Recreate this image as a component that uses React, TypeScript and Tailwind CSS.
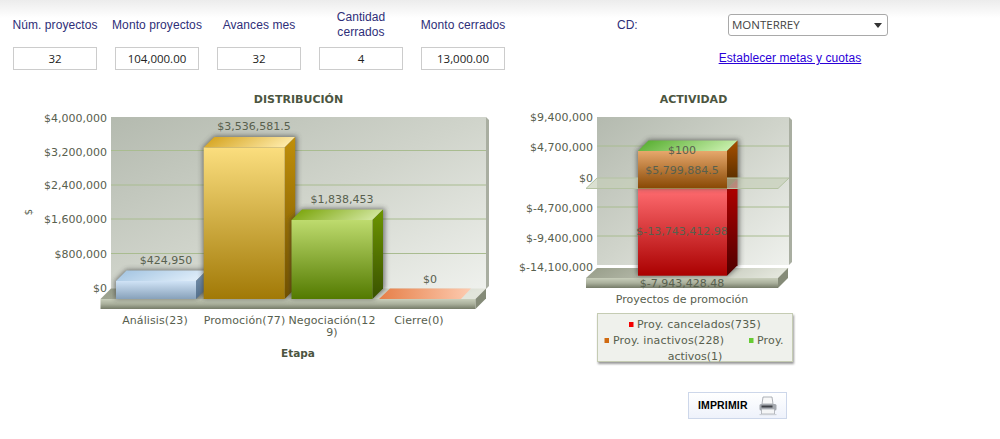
const F = "'DejaVu Sans', sans-serif";
const TC = "#58604e";

function T({ x, y, a = "middle", b = false, c = TC, s = 11, ls = 0, children }: { x: number; y: number; a?: "start" | "middle" | "end"; b?: boolean; c?: string; s?: number; ls?: number; children: React.ReactNode }) {
  return (
    <text x={x} y={y} textAnchor={a} fontFamily={F} fontSize={s} fontWeight={b ? 700 : 400} fill={c} letterSpacing={ls}>
      {children}
    </text>
  );
}

function Grad({ id, stops, x2 = 0, y2 = 1 }: { id: string; stops: string[]; x2?: number; y2?: number }) {
  return (
    <linearGradient id={id} x1="0" y1="0" x2={x2} y2={y2}>
      {stops.map((c, i) => (
        <stop key={i} offset={i / (stops.length - 1)} stopColor={c} />
      ))}
    </linearGradient>
  );
}

function Defs() {
  return (
    <defs>
      <Grad id="wall" stops={["#b4baaf", "#d0d4cb", "#eff1ed"]} x2={1} y2={1} />
      <Grad id="floorF" stops={["#c8cebb", "#aab09c", "#757b68"]} />
      <Grad id="floorT" stops={["#969c88", "#e2e5db"]} x2={1} y2={0.1} />
      <Grad id="blueF" stops={["#d0e3f6", "#87a1ba"]} />
      <Grad id="blueT" stops={["#a0c2e0", "#dcebf8"]} x2={1} y2={0.3} />
      <Grad id="blueS" stops={["#7a96b2", "#54708c"]} />
      <Grad id="yelF" stops={["#fbde7e", "#a17906"]} />
      <Grad id="yelT" stops={["#d29e14", "#fde9a6"]} x2={1} y2={0.2} />
      <Grad id="yelS" stops={["#c08f0a", "#745300"]} />
      <Grad id="grnF" stops={["#bedb6e", "#537a00"]} />
      <Grad id="grnT" stops={["#74a000", "#cfe49a"]} x2={1} y2={0.2} />
      <Grad id="grnS" stops={["#6c9500", "#3a5200"]} />
      <Grad id="cie" stops={["#e67f48", "#fdcbb0"]} x2={1} y2={0} />
      <Grad id="limeT" stops={["#50aa28", "#c4eca8"]} x2={1} y2={0.2} />
      <Grad id="oraF" stops={["#e6a86c", "#884804"]} />
      <Grad id="oraS" stops={["#a85000", "#4a2800"]} />
      <Grad id="redF" stops={["#ff6c70", "#aa0000"]} />
      <Grad id="redS" stops={["#b80000", "#4e0000"]} />
      <filter id="blur" x="-30%" y="-30%" width="160%" height="160%">
        <feGaussianBlur stdDeviation="2.5" />
      </filter>
      <filter id="legShadow" x="-5%" y="-10%" width="110%" height="125%">
        <feDropShadow dx="1" dy="2" stdDeviation="1" floodColor="#000" floodOpacity="0.4" />
      </filter>
    </defs>
  );
}

function Bar({ x, w, top, bottom, d = 10.5, front, topFill, side }: { x: number; w: number; top: number; bottom: number; d?: number; front: string; topFill: string; side: string }) {
  const r = x + w;
  return (
    <g>
      <path d={`M${x - 1} ${top} L${x + d} ${top - d - 1} H${r + d + 2} V${bottom - d} L${r + 1} ${bottom} H${x - 1}Z`} fill="#333" opacity="0.6" filter="url(#blur)" />
      <path d={`M${x} ${top} L${x + d} ${top - d} H${r + d} L${r} ${top}Z`} fill={`url(#${topFill})`} />
      <path d={`M${r} ${top} L${r + d} ${top - d} V${bottom - d} L${r} ${bottom}Z`} fill={`url(#${side})`} />
      <rect x={x} y={top} width={w} height={bottom - top} fill={`url(#${front})`} />
    </g>
  );
}

function Dist() {
  const grid = [150.5, 185, 219, 253.5];
  const ys: [string, number][] = [["$4,000,000", 122], ["$3,200,000", 156], ["$2,400,000", 189], ["$1,600,000", 223], ["$800,000", 258], ["$0", 292]];
  return (
    <svg width="480" height="290" viewBox="20 90 480 290" className="shrink-0">
      <Defs />
      <T x={298.5} y={103} b s={11} c="#4c5540">DISTRIBUCIÓN</T>
      <path d="M486 117 L489 120 V286 L486 289Z" fill="#a9aea1" />
      <rect x="111" y="117" width="375" height="172" fill="url(#wall)" />
      {grid.map((y) => (
        <line key={y} x1="111" x2="486" y1={y} y2={y} stroke="#a9bc90" strokeWidth="1" />
      ))}
      <path d="M100.5 299 L111 288.5 H486 L475.5 299Z" fill="url(#floorT)" />
      <rect x="100.5" y="299" width="375" height="10" fill="url(#floorF)" />
      <path d="M475.5 299 L486 288.5 V298.5 L475.5 309Z" fill="#858b78" />
      <Bar x={116} w={80} top={281} bottom={299} front="blueF" topFill="blueT" side="blueS" />
      <Bar x={203.7} w={81} top={147.5} bottom={299} front="yelF" topFill="yelT" side="yelS" />
      <Bar x={291.5} w={81} top={220} bottom={299} front="grnF" topFill="grnT" side="grnS" />
      <path d="M379 299 L390 288.5 H471 L461 299Z" fill="url(#cie)" />
      {ys.map(([l, y]) => (
        <T key={l} x={107} y={y} a="end">{l}</T>
      ))}
      <T x={254} y={130}>$3,536,581.5</T>
      <T x={342} y={203}>$1,838,453</T>
      <T x={166} y={264}>$424,950</T>
      <T x={430} y={283}>$0</T>
      <T x={155} y={324} ls={0.1}>Análisis(23)</T>
      <T x={244.5} y={324} ls={0.1}>Promoción(77)</T>
      <T x={332} y={324} ls={0.1}>Negociación(12</T>
      <T x={332} y={336}>9)</T>
      <T x={419} y={324} ls={0.1}>Cierre(0)</T>
      <T x={298} y={357} b s={10.5} c="#4c5540">Etapa</T>
      <g transform="rotate(-90 29 212)">
        <T x={29} y={215} s={10}>$</T>
      </g>
    </svg>
  );
}

function Actividad() {
  const ys: [string, number][] = [["$9,400,000", 121], ["$4,700,000", 151], ["$0", 182], ["$-4,700,000", 212], ["$-9,400,000", 242], ["$-14,100,000", 271]];
  return (
    <svg width="290" height="290" viewBox="510 90 290 290" className="shrink-0">
      <Defs />
      <T x={693.5} y={103} b s={11} c="#4c5540">ACTIVIDAD</T>
      <path d="M789 117 L792 120 V262 L789 265Z" fill="#a9aea1" />
      <rect x="597" y="117" width="192" height="148" fill="url(#wall)" />
      {[146, 207, 236].map((y) => (
        <line key={y} x1="597" x2="789" y1={y} y2={y} stroke="#a9bc90" strokeWidth="1" />
      ))}
      <path d="M586 278 L597 268 H789 L778 278Z" fill="url(#floorT)" />
      <rect x="586" y="278" width="192" height="10" fill="url(#floorF)" />
      <path d="M778 278 L788 268 V278 L778 288Z" fill="#858b78" />
      <Bar x={638} w={89} top={188.5} bottom={275.7} front="redF" topFill="oraS" side="redS" />
      <Bar x={638} w={89} top={151} bottom={188.5} front="oraF" topFill="limeT" side="oraS" />
      <path d="M586 188.5 L597 178 H789 L778 188.5Z" fill="#c6cfb8" fillOpacity="0.65" stroke="#b4c2a2" strokeWidth="1" />
      <rect x="638" y="151" width="89" height="37.5" fill="url(#oraF)" />
      {ys.map(([l, y]) => (
        <T key={l} x={593} y={y} a="end">{l}</T>
      ))}
      <T x={682} y={154}>$100</T>
      <T x={682} y={173.5}>$5,799,884.5</T>
      <T x={682} y={235}>$-13,743,412.98</T>
      <T x={682} y={287}>$-7,943,428.48</T>
      <T x={682} y={303}>Proyectos de promoción</T>
      <rect x="597.5" y="313.5" width="195" height="48" fill="#eff1ec" stroke="#c5ccb3" filter="url(#legShadow)" />
      <rect x="629" y="322" width="4.5" height="5" fill="#f40000" />
      <T x={637} y={328} a="start" ls={0.15}>Proy. cancelados(735)</T>
      <rect x="604.5" y="338" width="4.5" height="5" fill="#d06a10" />
      <T x={613} y={344} a="start" ls={0.15}>Proy. inactivos(228)</T>
      <rect x="749" y="338" width="4.5" height="5" fill="#66cc33" />
      <T x={757} y={344} a="start" ls={0.15}>Proy.</T>
      <T x={695} y={360}>activos(1)</T>
    </svg>
  );
}

function Printer() {
  return (
    <svg width="20" height="20" viewBox="0 0 20 20">
      <path d="M5 1 H14 L15 8 H4Z" fill="#f8f8f8" stroke="#9a9ea4" strokeWidth="0.8" />
      <rect x="1.5" y="8" width="17" height="6.5" rx="1.5" fill="#a4a8ae" />
      <rect x="3.5" y="9.5" width="11" height="2" fill="#3e4146" />
      <path d="M3.5 13 H16.5 V18 H3.5Z" fill="#f4f5f6" stroke="#a8acb2" strokeWidth="0.8" />
      <rect x="1.5" y="18" width="17" height="1.2" fill="#ccd0d6" />
    </svg>
  );
}

const metrics = [
  { label: "Núm. proyectos", value: "32" },
  { label: "Monto proyectos", value: "104,000.00" },
  { label: "Avances mes", value: "32" },
  { label: "Cantidad cerrados", value: "4" },
  { label: "Monto cerrados", value: "13,000.00" },
];

export default function App() {
  return (
    <div className="w-[1000px] h-[439px] overflow-hidden bg-white bg-[linear-gradient(#ececec,#ffffff_18px)] font-['Liberation_Sans',sans-serif]">
      <div className="flex h-[90px] pl-[13px] pt-[7px]">
        <div className="flex gap-[18px] w-[604px]">
          {metrics.map((m) => (
            <div key={m.label} className="flex flex-col items-center w-[84px]">
              <div className="h-[36px] mb-[4px] w-[102px] shrink-0 flex items-center justify-center text-center text-[12px] leading-[15px] text-[#2e2e78] tracking-[0.08px] px-[14px]">
                {m.label === "Cantidad cerrados" ? m.label : <span className="whitespace-nowrap">{m.label}</span>}
              </div>
              <div className="w-[84px] h-[23px] border border-[#cccccc] bg-white flex items-center justify-center text-[11.5px] text-[#222222] font-['Open_Sans',sans-serif]">
                {m.value}
              </div>
            </div>
          ))}
        </div>
        <div className="h-[36px] w-[111px] flex items-center text-[12px] text-[#2e2e78]">CD:</div>
        <div className="flex flex-col items-center w-[160px]">
          <div className="mt-[7px] w-[160px] h-[22px] shrink-0 border border-[#a9a9a9] rounded-[3px] bg-white flex items-center justify-between pl-[3px] pr-[4px] text-[11.5px] text-[#444444] font-['Open_Sans',sans-serif]">
            <span>MONTERREY</span>
            <span className="w-0 h-0 border-x-[4px] border-x-transparent border-t-[5px] border-t-[#333333] mr-[1px]" />
          </div>
          <a href="#" className="mt-[15px] -ml-[36px] whitespace-nowrap text-[12px] leading-[14px] tracking-[0.08px] text-[#2a00d8] underline">
            Establecer metas y cuotas
          </a>
        </div>
      </div>
      <div className="flex pl-[20px] gap-[10px]">
        <Dist />
        <div className="flex flex-col items-start">
          <Actividad />
          <button className="ml-[178px] mt-[12px] w-[99px] h-[27px] border border-[#cdd7ea] bg-[linear-gradient(#ffffff,#eef2fb)] flex items-center pl-[9px] gap-[10px] text-[10.5px] font-bold text-black tracking-[0.15px]">
            <span>IMPRIMIR</span>
            <Printer />
          </button>
        </div>
      </div>
    </div>
  );
}
